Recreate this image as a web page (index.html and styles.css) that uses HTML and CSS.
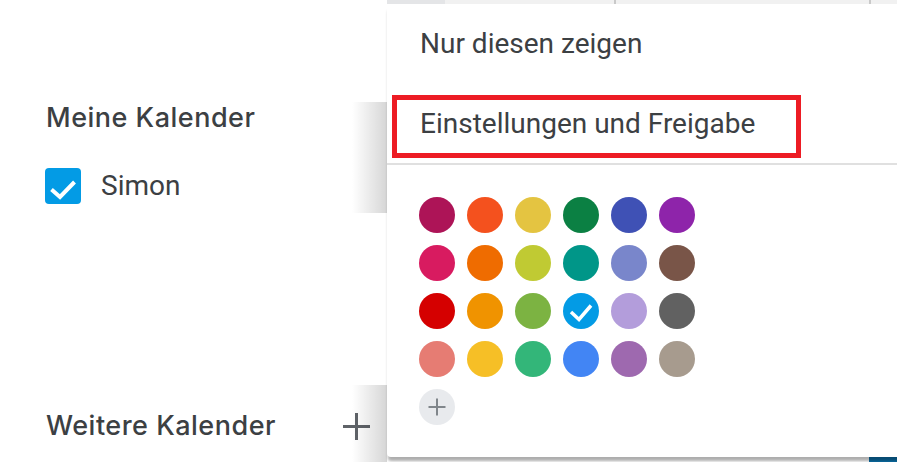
FILE: index.html
```html
<!DOCTYPE html>
<html lang="de">
<head>
  <meta charset="UTF-8">
  <meta name="viewport" content="width=device-width, initial-scale=1.0">
  <title>Kalender</title>
  <link rel="stylesheet" href="styles.css">
</head>
<body>
  <div class="page">
    <!-- Left column: calendar lists -->
    <aside class="sidebar">
      <h2 class="section-title">Meine Kalender</h2>
      <label class="cal-item">
        <span class="checkbox">
          <svg viewBox="0 0 36 36" width="36" height="36"><polyline points="6.5,21.5 15,29 29.5,14" /></svg>
        </span>
        <span class="cal-name">Simon</span>
      </label>
      <div class="section-title other">
        <span>Weitere Kalender</span>
        <svg class="add-icon" viewBox="0 0 27 27" width="27" height="27"><path d="M13.5 0v27M0 13.5h27" /></svg>
      </div>
    </aside>

    <!-- Calendar grid behind the menu -->
    <main class="grid">
      <div class="grid-head">
        <div class="head-cell first"></div>
        <div class="head-cell"></div>
        <div class="head-cell"></div>
        <div class="head-cell"></div>
      </div>
      <div class="grid-body"></div>
      <div class="grid-foot"><span class="event-chip"></span></div>
    </main>
  </div>

  <!-- Shadow slivers where the menu sits over the sidebar -->
  <span class="edge-shadow upper"></span>
  <span class="edge-shadow lower"></span>

  <!-- Calendar options menu -->
  <div class="menu">
    <div class="menu-item">Nur diesen zeigen</div>
    <div class="menu-item marked">Einstellungen und Freigabe</div>
    <div class="menu-divider"></div>
    <div class="swatches" id="swatches"></div>
  </div>

  <script>
    // Calendar colour palette, row by row
    var colors = [
      '#ad1457', '#f4511e', '#e4c441', '#0b8043', '#3f51b5', '#8e24aa',
      '#d81b60', '#ef6c00', '#c0ca33', '#009688', '#7986cb', '#795548',
      '#d50000', '#f09300', '#7cb342', '#039be5', '#b39ddb', '#616161',
      '#e67c73', '#f6bf26', '#33b679', '#4285f4', '#9e69af', '#a79b8e'
    ];
    var selected = '#039be5';

    var box = document.getElementById('swatches');
    colors.forEach(function(c) {
      var dot = document.createElement('span');
      dot.className = 'swatch';
      dot.style.background = c;
      if (c === selected) {
        dot.innerHTML = '<svg viewBox="0 0 36 36" width="36" height="36"><polyline points="8,19 16,26.5 28,12.5" /></svg>';
      }
      box.appendChild(dot);
    });

    // Button for a custom colour
    var add = document.createElement('span');
    add.className = 'swatch custom';
    add.innerHTML = '<svg viewBox="0 0 36 36" width="36" height="36"><path d="M18 9.5v17M9.5 18h17" /></svg>';
    box.appendChild(add);
  </script>
</body>
</html>
```

FILE: styles.css
```css
body {
  margin: 0;
  background: #fff;
  overflow: hidden;
  font-family: Roboto, "Liberation Sans", sans-serif;
  color: #3c4043;
}

.page {
  display: flex;
  height: 462px;
}

/* Sidebar */
.sidebar {
  width: 387px;
  box-sizing: border-box;
  padding: 98px 17px 0 46px;
  flex-shrink: 0;
}

.section-title {
  margin: 0;
  font-family: Inter, "Open Sans", sans-serif;
  font-weight: 500;
  font-size: 27px;
  line-height: 40px;
  letter-spacing: 0.5px;
  color: #3c4043;
}

.section-title.other {
  display: flex;
  justify-content: space-between;
  align-items: center;
  margin-top: 202px;
}

.add-icon path {
  stroke: #5f6368;
  stroke-width: 3;
  fill: none;
}

.cal-item {
  display: flex;
  align-items: center;
  height: 36px;
  margin-top: 30px;
  margin-left: -1px;
}

.checkbox {
  width: 36px;
  height: 36px;
  border-radius: 4px;
  background: #039be5;
  display: flex;
}

.checkbox polyline {
  fill: none;
  stroke: #fff;
  stroke-width: 4;
}

.cal-name {
  margin-left: 20px;
  font-size: 28px;
  line-height: 36px;
}

/* Calendar grid */
.grid {
  flex: 1;
  display: flex;
  flex-direction: column;
}

.grid-head {
  display: grid;
  grid-template-columns: 58px 169px 255px 1fr;
  height: 4px;
  background: #f1f1f1;
}

.head-cell {
  border-left: 2px solid #c9c9c9;
}

.head-cell.first {
  border-left: none;
  background: #e4e5e7;
}

.head-cell:nth-child(2) {
  border-left: none;
}

.grid-body {
  flex: 1;
}

.grid-foot {
  display: flex;
  justify-content: flex-end;
  height: 5px;
}

.event-chip {
  width: 28px;
  background: #0b6fa8;
}

/* Shadow slivers */
.edge-shadow {
  position: absolute;
  left: 352px;
  width: 35px;
  background: linear-gradient(to right, rgba(0, 0, 0, 0), rgba(0, 0, 0, 0.16));
}

.edge-shadow.upper {
  top: 102px;
  height: 111px;
}

.edge-shadow.lower {
  top: 385px;
  height: 77px;
}

/* Menu */
.menu {
  position: absolute;
  left: 387px;
  top: 4px;
  width: 540px;
  height: 453px;
  box-sizing: border-box;
  padding-top: 8px;
  background: #fff;
  border-radius: 4px;
  box-shadow: 0 5px 3px -1px rgba(0, 0, 0, 0.32);
}

.menu-item {
  padding: 12px 0 12px 33px;
  font-size: 28px;
  line-height: 40px;
  color: #3c4043;
}

.menu-item + .menu-item {
  margin-top: 16px;
}

.menu-item.marked {
  position: relative;
}

.menu-item.marked::after {
  content: "";
  position: absolute;
  left: 5px;
  top: 3px;
  width: 399px;
  height: 53px;
  border: 5px solid #ed1c24;
}

.menu-divider {
  height: 2px;
  margin-top: 7px;
  background: #e0e0e0;
}

.swatches {
  display: grid;
  grid-template-columns: repeat(6, 36px);
  gap: 12px;
  padding: 32px 0 0 32px;
}

.swatch {
  width: 36px;
  height: 36px;
  border-radius: 50%;
  display: flex;
}

.swatch polyline {
  fill: none;
  stroke: #fff;
  stroke-width: 3.5;
}

.swatch.custom {
  background: #e8eaed;
}

.swatch.custom path {
  stroke: #80868b;
  stroke-width: 2;
  fill: none;
}
```
